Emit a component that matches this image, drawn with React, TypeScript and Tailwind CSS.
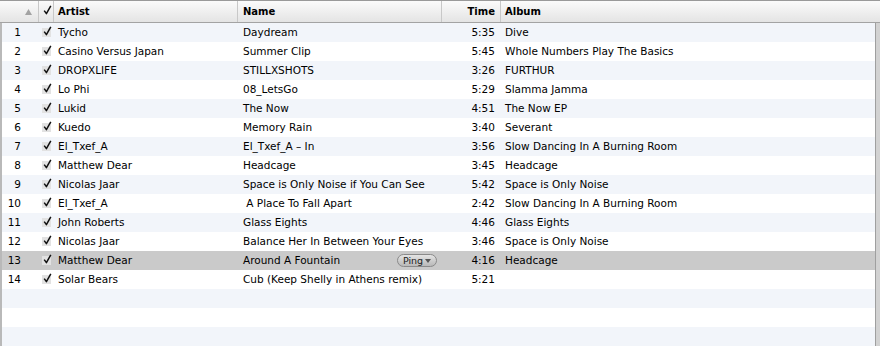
const tracks = [
  { n: 1, artist: "Tycho", name: "Daydream", time: "5:35", album: "Dive" },
  { n: 2, artist: "Casino Versus Japan", name: "Summer Clip", time: "5:45", album: "Whole Numbers Play The Basics" },
  { n: 3, artist: "DROPXLIFE", name: "STILLXSHOTS", time: "3:26", album: "FURTHUR" },
  { n: 4, artist: "Lo Phi", name: "08_LetsGo", time: "5:29", album: "Slamma Jamma" },
  { n: 5, artist: "Lukid", name: "The Now", time: "4:51", album: "The Now EP" },
  { n: 6, artist: "Kuedo", name: "Memory Rain", time: "3:40", album: "Severant" },
  { n: 7, artist: "El_Txef_A", name: "El_Txef_A – In", time: "3:56", album: "Slow Dancing In A Burning Room" },
  { n: 8, artist: "Matthew Dear", name: "Headcage", time: "3:45", album: "Headcage" },
  { n: 9, artist: "Nicolas Jaar", name: "Space is Only Noise if You Can See", time: "5:42", album: "Space is Only Noise" },
  { n: 10, artist: "El_Txef_A", name: "\u00a0A Place To Fall Apart", time: "2:42", album: "Slow Dancing In A Burning Room" },
  { n: 11, artist: "John Roberts", name: "Glass Eights", time: "4:46", album: "Glass Eights" },
  { n: 12, artist: "Nicolas Jaar", name: "Balance Her In Between Your Eyes", time: "3:46", album: "Space is Only Noise" },
  { n: 13, artist: "Matthew Dear", name: "Around A Fountain", time: "4:16", album: "Headcage" },
  { n: 14, artist: "Solar Bears", name: "Cub (Keep Shelly in Athens remix)", time: "5:21", album: "" },
]

const SELECTED = 13

function Check({ boxed }: { boxed?: boolean }) {
  return (
    <span className={`relative flex h-[9px] w-[9px] items-center justify-center ${boxed ? "bg-[#e2e2e2]" : ""}`}>
      <svg width="9" height="10" viewBox="0 0 9 10" className="absolute -top-[2px] left-[1px]">
        <path d="M1.2 5.6 L3.4 8.6 L7.8 0.8" fill="none" stroke="#111" strokeWidth="1.5" strokeLinejoin="round" />
      </svg>
    </span>
  )
}

function PingButton() {
  return (
    <span className="flex h-[13px] w-[40px] items-center justify-center gap-[2px] rounded-full border border-[#8a8a8a] bg-gradient-to-b from-[#e4e4e4] to-[#b9b9b9] text-[9.5px] leading-none text-[#222]">
      Ping
      <svg width="6" height="4" viewBox="0 0 6 4">
        <path d="M0 0 H6 L3 4 Z" fill="#555" />
      </svg>
    </span>
  )
}

export default function App() {
  const empty = [15, 16, 17]
  return (
    <div
      className="h-[346px] w-[880px] overflow-hidden bg-white text-black"
      style={{ fontFamily: '"DejaVu Sans", "Liberation Sans", sans-serif' }}
    >
      {/* header */}
      <div className="flex h-[23px] border-t border-b border-t-[#9a9a9a] border-b-[#a3a3a3] bg-gradient-to-b from-[#fbfbfb] to-[#e4e4e4] text-[10px] font-bold">
        <div className="flex w-[39px] items-center justify-end border-r border-[#c8c8c8] pr-[6px]">
          <svg width="7" height="6" viewBox="0 0 7 6">
            <path d="M3.5 0 L7 6 H0 Z" fill="#a2a2a2" />
          </svg>
        </div>
        <div className="flex w-[15px] items-center justify-center border-r border-[#c8c8c8]">
          <Check />
        </div>
        <div className="flex w-[184px] items-center border-r border-[#c8c8c8] pl-[4px]">Artist</div>
        <div className="flex w-[204px] items-center border-r border-[#c8c8c8] pl-[5px]">Name</div>
        <div className="flex w-[59px] items-center justify-end border-r border-[#c8c8c8] pr-[5px]">Time</div>
        <div className="flex flex-1 items-center pl-[4px]">Album</div>
      </div>

      {/* body */}
      <div className="flex">
        <div className="flex-1 border-l-2 border-[#b9b9b9] text-[10.5px]">
          {tracks.map((t) => {
            const sel = t.n === SELECTED
            const bg = sel ? "bg-[#cacaca]" : t.n % 2 === 1 ? "bg-[#f2f5fa]" : "bg-white"
            return (
              <div key={t.n} className={`flex h-[19px] items-center whitespace-nowrap ${bg}`}>
                <div className="w-[37px] pr-[18px] text-right">{t.n}</div>
                <div className="flex w-[15px] justify-center">
                  <Check boxed />
                </div>
                <div className="w-[184px] pl-[4px]">{t.artist}</div>
                <div className="flex w-[204px] items-center justify-between pl-[5px] pr-[5px]">
                  <span>{t.name}</span>
                  {sel && <PingButton />}
                </div>
                <div className="w-[59px] pr-[6px] text-right">{t.time}</div>
                <div className="flex-1 pl-[4px]">{t.album}</div>
              </div>
            )
          })}
          {empty.map((i) => (
            <div key={i} className={`h-[19px] ${i % 2 === 1 ? "bg-[#f2f5fa]" : "bg-white"}`} />
          ))}
        </div>
        <div className="w-[5px] border-l border-[#9f9f9f] bg-[#d2d2d2]" />
      </div>
    </div>
  )
}
